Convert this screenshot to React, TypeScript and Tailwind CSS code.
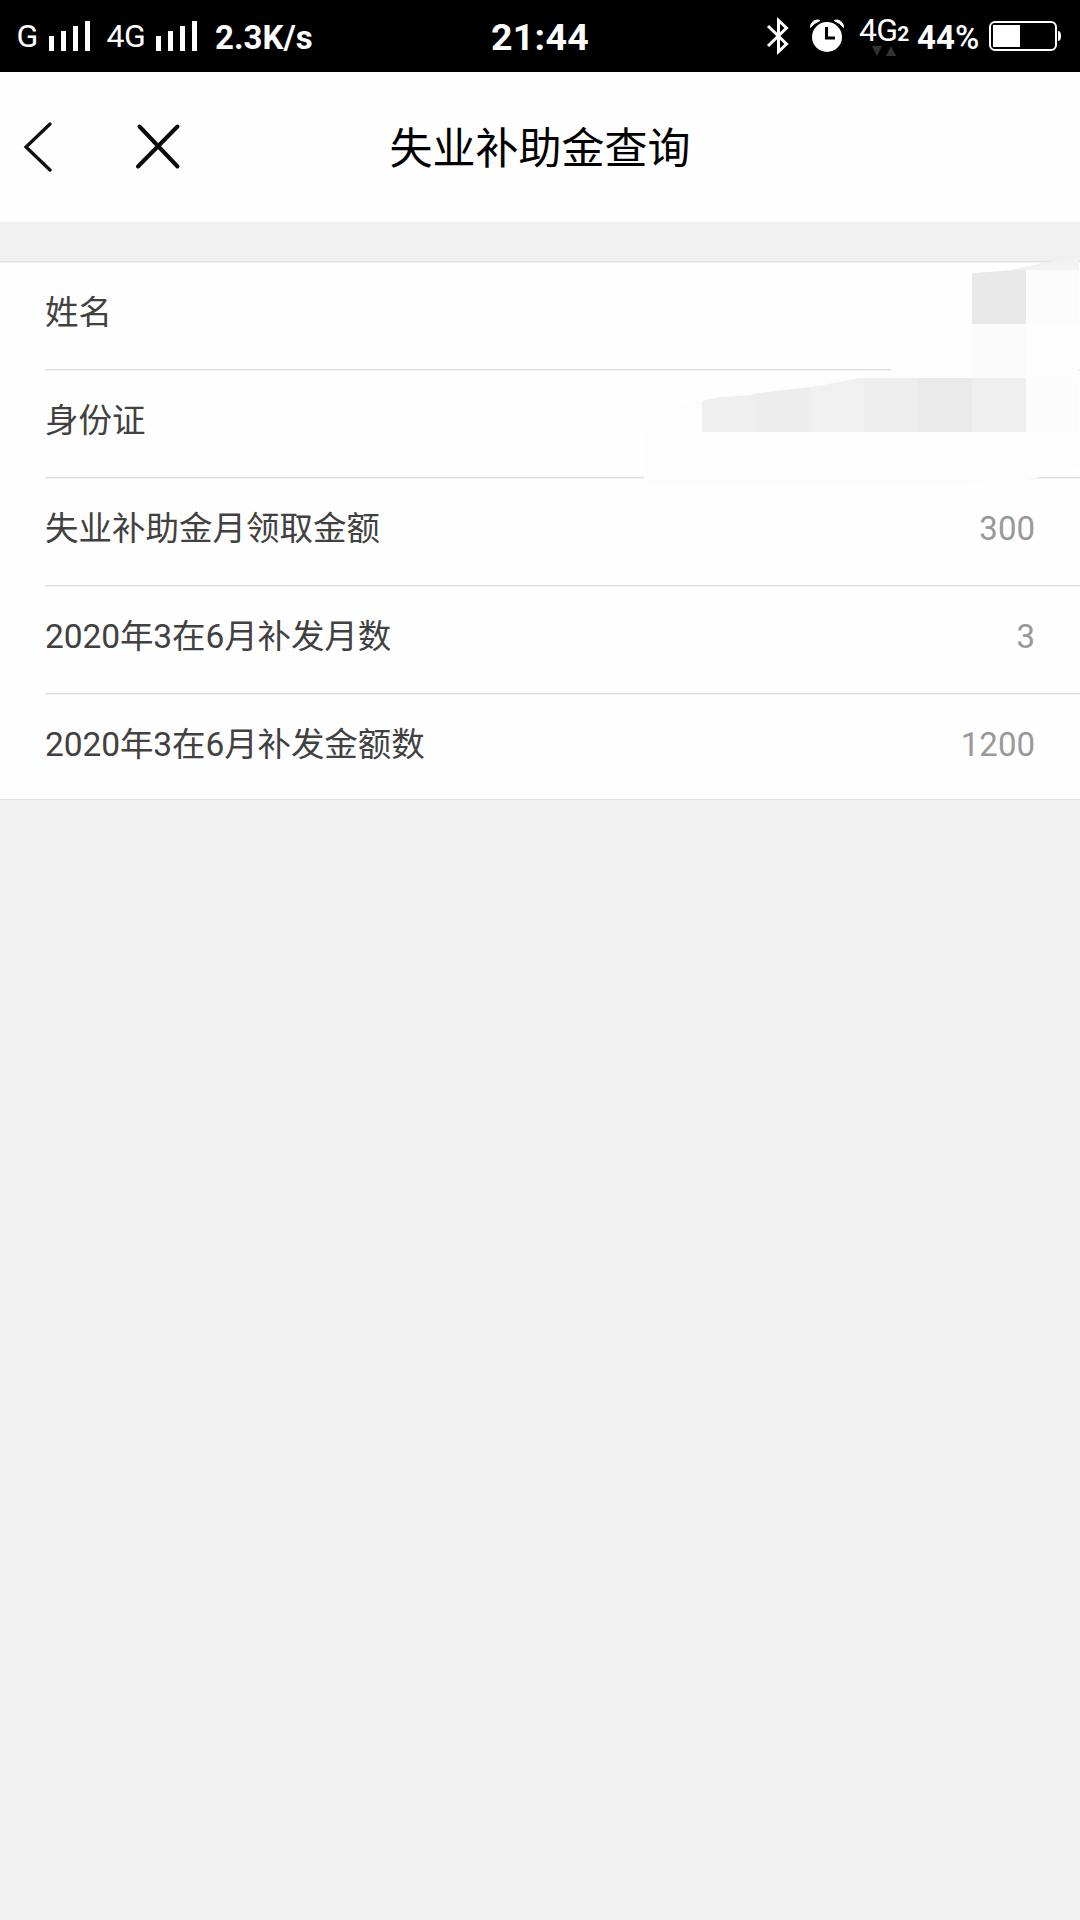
const rows = [
  { label: "姓名", value: "" },
  { label: "身份证", value: "" },
  { label: "失业补助金月领取金额", value: "300" },
  { label: "2020年3在6月补发月数", value: "3" },
  { label: "2020年3在6月补发金额数", value: "1200" },
];

function SignalBars() {
  return (
    <div className="flex h-[30px] w-[41px] shrink-0 items-end justify-between">
      <div className="h-[15px] w-[5px] bg-white" />
      <div className="h-[20px] w-[5px] bg-white" />
      <div className="h-[25px] w-[5px] bg-white" />
      <div className="h-[30px] w-[5px] bg-white" />
    </div>
  );
}

function StatusBar() {
  return (
    <div className="grid h-[72px] grid-cols-3 bg-black text-white">
      <div className="flex items-center whitespace-nowrap">
        <div className="w-[49px] pl-[16.500px] text-[32px] leading-[72px]">G</div>
        <SignalBars />
        <div className="w-[66px] pl-[16.500px] text-[32px] leading-[72px] tracking-[-0.5px]">4G</div>
        <SignalBars />
        <div className="pt-[4px] pl-[18px] text-[33px] leading-[68px] font-bold">2.3K/s</div>
      </div>
      <div className="pt-[2px] text-center text-[37.500px] leading-[70px] font-bold tracking-[0.3px]">21:44</div>
      <div className="flex items-center whitespace-nowrap">
        <svg className="ml-[46px] h-[40px] w-[24px] shrink-0" viewBox="0 0 24 40" fill="none" stroke="white" strokeWidth="3">
          <path d="M2 10 L20.500 28 L12.500 35.500 V4.500 L20.500 12 L2 30" />
        </svg>
        <svg className="ml-[20px] h-[34px] w-[34px] shrink-0" viewBox="0 0 34 34">
          <circle cx="17" cy="18" r="15" fill="white" />
          <path d="M0.500 8.500 A7 7 0 0 1 10 1.500 Q4 4 0.500 8.500 Z M33.500 8.500 A7 7 0 0 0 24 1.500 Q30 4 33.500 8.500 Z" fill="white" stroke="white" />
          <path d="M16.500 8 V19 H25" fill="none" stroke="black" strokeWidth="3" />
        </svg>
        <div className="flex w-[57px] shrink-0 flex-col pl-[15px]">
          <div className="flex h-[26px] items-baseline text-[32px] leading-[26px]">
            <span className="tracking-[-0.8px]">4G</span>
            <span className="text-[21px] font-bold">2</span>
          </div>
          <svg className="mt-[3px] ml-[13px] h-[10px] w-[24px]" viewBox="0 0 24 10" fill="#333333">
            <path d="M0 0 H10 L5 10 Z M14 10 H24 L19 0 Z" />
          </svg>
        </div>
        <div className="w-[88px] shrink-0 pt-[3px] pl-[16px] text-[33px] leading-[69px] font-bold">
          44<span className="font-medium">%</span>
        </div>
        <svg className="h-[30px] w-[72px] shrink-0" viewBox="0 0 72 30">
          <rect x="1" y="1" width="66" height="28" rx="5" fill="none" stroke="white" strokeWidth="2" />
          <rect x="4" y="4" width="27" height="22" fill="white" />
          <path d="M69 10 Q72 10 72 15 Q72 20 69 20 Z" fill="white" />
        </svg>
      </div>
    </div>
  );
}

function TitleBar() {
  return (
    <header className="grid h-[150px] grid-cols-3 items-center bg-[#fefefe]">
      <div className="flex">
        <svg className="ml-[22px] h-[52px] w-[30px]" viewBox="0 0 30 52" fill="none" stroke="#111111" strokeWidth="3.300" strokeLinecap="round">
          <path d="M28 3 L4 26 L28 49" />
        </svg>
        <svg className="ml-[82px] h-[52px] w-[48px]" viewBox="0 0 48 52" fill="none" stroke="#0a0a0a" strokeWidth="4" strokeLinecap="round">
          <path d="M5.500 5.500 L43.500 45.500 M43.500 5.500 L4 45.500" />
        </svg>
      </div>
      <h1 className="pt-[4px] text-center text-[43px] leading-[60px] whitespace-nowrap text-black">失业补助金查询</h1>
    </header>
  );
}

/* Mosaic that hides the personal values in the first two rows */
function Redaction() {
  return (
    <svg className="absolute -top-[52px] right-0 h-[290px] w-[460px]" viewBox="620 210 460 290">
      <path d="M892 372 L885 352 V324 L918 279 L972 273 L1079 262 V400 H892 Z" fill="#fefefe" />
      <path d="M644 485 V440 Q650 412 680 405 L702 400 L860 376 L892 372 V368 H1079 V468 L1036 478 L960 485 Z" fill="#fdfdfd" />
      <path d="M1010 270 L1028 266 L1048 262 L1060 260 L1079 257 V270 Z" fill="#f2f2f2" />
      <path d="M972 273.300 L1015 270 H1026 V324 H972 Z" fill="#e8e8e8" />
      <g shapeRendering="crispEdges">
        <rect x="1026" y="270" width="53" height="54" fill="#fcfcfc" />
        <rect x="972" y="324" width="54" height="54" fill="#fbfbfb" />
        <rect x="1026" y="324" width="53" height="54" fill="#fdfdfd" />
        <rect x="1026" y="378" width="53" height="54" fill="#fcfcfc" />
      </g>
      <path d="M702 401 L717 397.500 L750 395 L756 393.500 V432 H702 Z" fill="#efefef" />
      <path d="M756 393.500 L810 387 V432 H756 Z" fill="#ededed" />
      <path d="M810 387 L818 386 L860 378 H864 V432 H810 Z" fill="#f0f0f0" />
      <rect x="864" y="378" width="54" height="54" fill="#eeeeee" />
      <rect x="918" y="378" width="54" height="54" fill="#eaeaea" />
      <rect x="972" y="378" width="54" height="54" fill="#efefef" />
    </svg>
  );
}

export default function App() {
  return (
    <div className="min-h-[1920px] w-[1080px] bg-[#f0f0f0] font-['Roboto','Noto_Sans_CJK_SC',sans-serif]">
      <StatusBar />
      <TitleBar />
      <main className="relative mt-[39px] border-t border-[#e0e0e0] bg-[#fefefe]">
        <div className="h-px bg-[#f0f0f0]" />
        {rows.map((row, i) => (
          <div key={row.label} className={i === rows.length - 1 ? "h-[106px]" : "h-[108px] pl-[45px]"}>
            <div
              className={
                i === rows.length - 1
                  ? "flex h-[105px] justify-between border-b border-[#e2e2e2] pr-[45px] pl-[45px] leading-[100px]"
                  : "flex h-[107px] justify-between border-b border-[#e0e0e0] pr-[45px] leading-[100px]"
              }
            >
              <span className={i > 2 ? "text-[33.500px] tracking-[-0.1px] text-[#414141]" : "text-[33.500px] text-[#414141]"}>
                {row.label}
              </span>
              <span className="text-[33px] text-[#999999]">{row.value}</span>
            </div>
            <div className="h-px bg-[#f0f0f0]" />
          </div>
        ))}
        <Redaction />
      </main>
    </div>
  );
}
